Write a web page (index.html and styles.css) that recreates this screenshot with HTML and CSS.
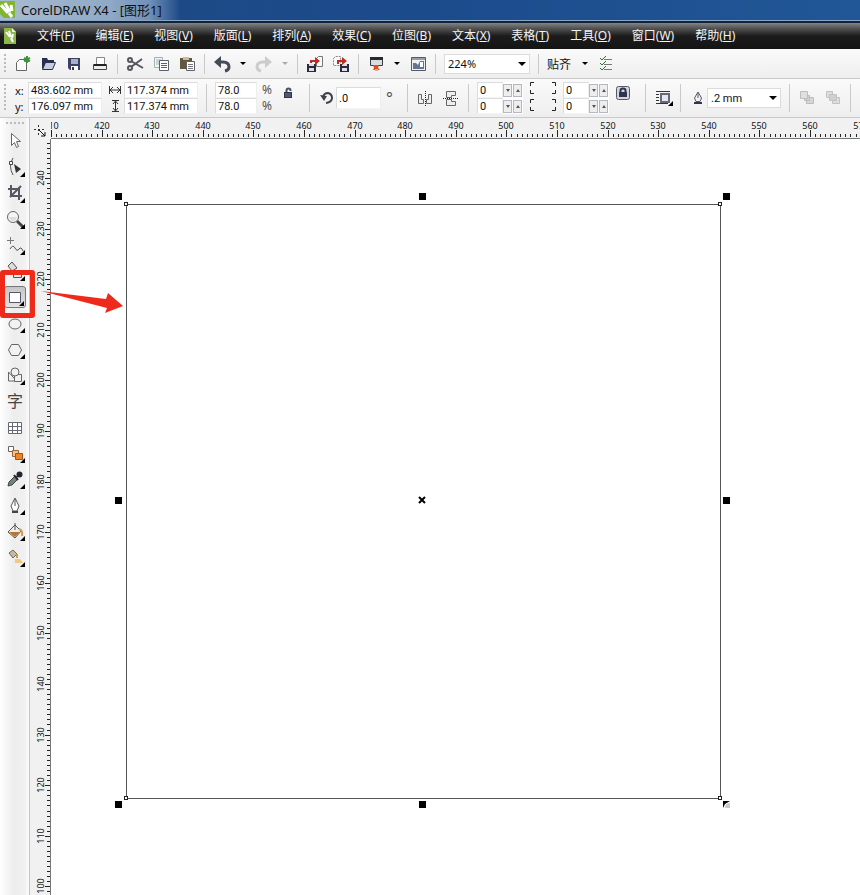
FILE: index.html
```html
<!DOCTYPE html>
<html lang="zh-CN">
<head>
    <meta charset="UTF-8">
    <meta name="viewport" content="width=device-width, initial-scale=1.0">
    <title>CorelDRAW X4 - [图形1]</title>
    <link rel="stylesheet" href="styles.css">
</head>
<body>

    <header class="title-bar">
        <svg class="app-icon" width="16" height="18" viewBox="0 0 16 18">
            <path d="M0 0h15v17H4L0 13z" fill="#7fb62c"/>
            <path d="M1 4l7 8M5 2l5 9M11 4l1 6M9 12l3 4" stroke="#fff" stroke-width="3"/>
        </svg>
        <h1>CorelDRAW X4 - [图形1]</h1>
    </header>

    <nav class="menu-bar">
        <svg class="doc-icon" width="12" height="16" viewBox="0 0 12 16">
            <path d="M0 0h8l4 4v12H0z" fill="#8fb648"/>
            <path d="M8 0v4h4" fill="#e8f0d8"/>
            <path d="M2 4l4 5M5 3l2 6M9 6l-1 4M7 10l2 4" stroke="#fff" stroke-width="2"/>
        </svg>
        <a href="#">文件(<u>F</u>)</a>
        <a href="#">编辑(<u>E</u>)</a>
        <a href="#">视图(<u>V</u>)</a>
        <a href="#">版面(<u>L</u>)</a>
        <a href="#">排列(<u>A</u>)</a>
        <a href="#">效果(<u>C</u>)</a>
        <a href="#">位图(<u>B</u>)</a>
        <a href="#">文本(<u>X</u>)</a>
        <a href="#">表格(<u>T</u>)</a>
        <a href="#">工具(<u>O</u>)</a>
        <a href="#">窗口(<u>W</u>)</a>
        <a href="#">帮助(<u>H</u>)</a>
    </nav>

    <!-- Standard toolbar -->
    <div class="toolbar standard-bar">
        <span class="grip"></span>
        <div class="group">
            <button class="icon-btn" aria-label="New">
                <svg viewBox="0 0 18 18"><path d="M3.500 7.500l3-3h7v11h-10z" fill="#fafafa" stroke="#666"/><path d="M14 1v7M11 3l6 3M17 3l-6 3" stroke="#3d9440" stroke-width="2"/></svg>
            </button>
            <button class="icon-btn" aria-label="Open">
                <svg viewBox="0 0 18 18"><path d="M3 14V3h5l1 2h6v3" fill="#29304c"/><path d="M3.500 14.500l3-7h10l-3 7z" fill="#c3cce0" stroke="#29304c"/></svg>
            </button>
            <button class="icon-btn" aria-label="Save">
                <svg viewBox="0 0 18 18"><path d="M3 3h12v12H5l-2-2z" fill="#3a4066"/><path d="M6 4h7v5H6z" fill="#a9b0ca"/><path d="M6 11h7v4H6z" fill="#fff"/><path d="M7 12h2v3H7z" fill="#333a58"/></svg>
            </button>
            <button class="icon-btn" aria-label="Print">
                <svg viewBox="0 0 18 18"><path d="M5.500 9V2.500h8V9" fill="#fff" stroke="#888"/><path d="M2.500 9.500h13v5h-13z" fill="#eee" stroke="#444"/><path d="M3 9h12v2H3z" fill="#222"/></svg>
            </button>
        </div>
        <span class="sep"></span>
        <div class="group">
            <button class="icon-btn" aria-label="Cut">
                <svg viewBox="0 0 18 18" fill="none" stroke="#55565e" stroke-width="2"><path d="M5 6l12 7M5 12L16 4"/><circle cx="4" cy="5" r="2"/><circle cx="4" cy="13" r="2"/></svg>
            </button>
            <button class="icon-btn" aria-label="Copy">
                <svg viewBox="0 0 18 18"><path d="M2.500 2.500h8v10h-8z" fill="#f1f4f4" stroke="#a2b3b5"/><path d="M4 5h5M4 7h3M4 9h3" stroke="#a2b3b5"/><path d="M7.500 5.500h9v10h-9z" fill="#fff" stroke="#5d6170"/><path d="M9 8.500h6M9 10.500h6M9 12.500h6" stroke="#5d6170"/></svg>
            </button>
            <button class="icon-btn" aria-label="Paste">
                <svg viewBox="0 0 18 18"><path d="M2 3h12v11H2z" fill="#65573d"/><path d="M5 2h6v3H5z" fill="#c7bd9e"/><path d="M8.500 6.500h8v9h-8z" fill="#fff" stroke="#5d6170"/><path d="M10 9.500h5M10 11.500h5M10 13.500h5" stroke="#777"/></svg>
            </button>
        </div>
        <span class="sep"></span>
        <div class="group">
            <button class="icon-btn" aria-label="Undo">
                <svg viewBox="0 0 18 18"><path d="M5 7h5q6 0 6 5 0 3-4 4" fill="none" stroke="#454a57" stroke-width="3"/><path d="M1 7l7-6v12z" fill="#454a57"/></svg>
            </button>
            <button class="caret" aria-label="Undo list"></button>
            <button class="icon-btn" aria-label="Redo" disabled>
                <svg viewBox="0 0 18 18"><path d="M13 7H8q-6 0-6 5 0 3 4 4" fill="none" stroke="#ccc" stroke-width="3"/><path d="M17 7l-7-6v12z" fill="#ccc"/></svg>
            </button>
            <button class="caret" aria-label="Redo list" disabled></button>
        </div>
        <span class="sep"></span>
        <div class="group">
            <button class="icon-btn" aria-label="Import">
                <svg viewBox="0 0 18 18"><path d="M10.500 3.500l2-2h4v10h-6z" fill="#f8f8f8" stroke="#777"/><path d="M1 9h9v8H1z" fill="#292b38"/><path d="M3 13h5v3H3zM3 9h5v2H3z" fill="#dde"/><path d="M4 8V5h5V2l5 4-5 4V7H6v1z" fill="#bd2c24"/></svg>
            </button>
            <button class="icon-btn" aria-label="Export">
                <svg viewBox="0 0 18 18"><path d="M1.500 3.500l2-2h5v9h-7z" fill="#f8f8f8" stroke="#888" stroke-dasharray="2 1"/><path d="M8 9h9v8H8z" fill="#292b38"/><path d="M10 13h5v3h-5zM10 9h5v2h-5z" fill="#dde"/><path d="M5 9V5h5V2l5 4-5 4V7H7v2z" fill="#bd2c24"/></svg>
            </button>
        </div>
        <span class="sep"></span>
        <div class="group">
            <button class="icon-btn" aria-label="Application launcher">
                <svg viewBox="0 0 18 18"><path d="M3.500 2.500h12v8h-12z" fill="#d9dbdf" stroke="#393c43"/><path d="M3 2h13v3H3z" fill="#282a30"/><path d="M6 10h6l-1 3 2 2H6l1-2z" fill="#df4c24"/><path d="M8 14h3v2H8z" fill="#f4ab52"/></svg>
            </button>
            <button class="caret" aria-label="Launcher list"></button>
            <button class="icon-btn" aria-label="Welcome screen">
                <svg viewBox="0 0 18 18"><path d="M2.500 2.500h14v13h-14z" fill="#eef0f4" stroke="#555a68"/><path d="M3 3h13v2H3z" fill="#999eab"/><path d="M4 8h3l2 2 2-4h4v8H4z" fill="#667392"/><path d="M11 7h3v5h-3z" fill="#fff"/></svg>
            </button>
        </div>
        <span class="sep"></span>
        <span class="select-wrap zoom-level">
            <select aria-label="Zoom level"><option>224%</option><option>100%</option></select>
        </span>
        <span class="sep"></span>
        <div class="group">
            <button class="text-btn">贴齐</button>
            <button class="caret" aria-label="Snap list"></button>
            <button class="icon-btn" aria-label="Options">
                <svg viewBox="0 0 18 18" fill="none"><path d="M7 4.500h8M7 9.500h8M7 14.500h8" stroke="#777"/><path d="M3 3l2 2 4-4M3 8l2 2 4-4M3 13l2 2 4-4" stroke="#2f7038"/></svg>
            </button>
        </div>
    </div>

    <!-- Property bar -->
    <div class="toolbar property-bar">
        <span class="grip"></span>
        <div class="fields position">
            <label for="pos-x">x:</label><input id="pos-x" type="text" value="483.602 mm">
            <label for="pos-y">y:</label><input id="pos-y" type="text" value="176.097 mm">
        </div>
        <div class="fields size">
            <label for="obj-w" aria-label="Width"><svg width="14" height="12" viewBox="0 0 14 12"><path d="M1.500 2v8M12.500 2v8M2 6h10M5 3L2 6l3 3M9 3l3 3-3 3" fill="none" stroke="#333"/></svg></label>
            <input id="obj-w" type="text" value="117.374 mm">
            <label for="obj-h" aria-label="Height"><svg width="14" height="12" viewBox="0 0 14 12"><path d="M4 .5h7M4 11.500h7M7.500 1v10M5 4l2.500-3L10 4M5 8l2.500 3L10 8" fill="none" stroke="#333"/></svg></label>
            <input id="obj-h" type="text" value="117.374 mm">
        </div>
        <span class="sep"></span>
        <div class="fields scale">
            <input id="scale-x" type="text" value="78.0"><label for="scale-x">%</label>
            <input id="scale-y" type="text" value="78.0"><label for="scale-y">%</label>
        </div>
        <button class="icon-btn lock-ratio" aria-label="Lock ratio">
            <svg viewBox="0 0 18 18"><path d="M6.500 8V5.500q0-2 2-2t2 2V6" fill="none" stroke="#4c4f60" stroke-width="2"/><path d="M4 7h8v6H4z" fill="#31344d"/><path d="M5 9h6M5 11h6" stroke="#777b98"/></svg>
        </button>
        <span class="sep"></span>
        <label class="rotate-label" for="angle" aria-label="Rotation">
            <svg width="14" height="14" viewBox="0 0 14 14"><path d="M3 6q1-4 5-4 4 1 4 5t-6 5" fill="none" stroke="#3e414b" stroke-width="2"/><path d="M0 4l7 1-3 5z" fill="#3e414b"/></svg>
        </label>
        <input class="angle" id="angle" type="text" value=".0">
        <span class="degree">°</span>
        <span class="sep"></span>
        <div class="group">
            <button class="icon-btn" aria-label="Mirror horizontal">
                <svg viewBox="0 0 18 18"><path d="M2.500 5.500h3v5h2v4h-5zM15.500 5.500h-3v5h-2v4h5z" fill="#eee" stroke="#666"/><path d="M9.500 2v15" stroke="#222" stroke-dasharray="1 1"/></svg>
            </button>
            <button class="icon-btn" aria-label="Mirror vertical">
                <svg viewBox="0 0 18 18"><path d="M4.500 2.500h9v4h-4v2h-5zM4.500 16.500h9v-4h-4v-2h-5z" fill="#eee" stroke="#666"/><path d="M1 9.500h16" stroke="#222" stroke-dasharray="1 1"/></svg>
            </button>
        </div>
        <span class="sep"></span>
        <div class="fields corners">
            <span class="spin"><input type="text" value="0" aria-label="Top left corner"><button class="down" aria-label="Less"></button><button class="up" aria-label="More"></button></span>
            <svg class="brackets" viewBox="0 0 40 34"><path d="M11 1.500H7.500V5M7.500 9v3.500H11M29 1.500h3.500V5M32.500 9v3.500H29M11 18.500H7.500V22M7.500 26v3.500H11M29 18.500h3.500V22M32.500 26v3.500H29" fill="none" stroke="#222"/></svg>
            <span class="spin"><input type="text" value="0" aria-label="Top right corner"><button class="down" aria-label="Less"></button><button class="up" aria-label="More"></button></span>
            <span class="spin"><input type="text" value="0" aria-label="Bottom left corner"><button class="down" aria-label="Less"></button><button class="up" aria-label="More"></button></span>
            <span class="spin"><input type="text" value="0" aria-label="Bottom right corner"><button class="down" aria-label="Less"></button><button class="up" aria-label="More"></button></span>
        </div>
        <button class="icon-btn round-all" aria-label="Round corners together">
            <svg viewBox="0 0 18 18"><rect x="2.500" y="1.500" width="13" height="13" rx="2" fill="#d4d5de" stroke="#555868"/><path d="M6.500 8V5.500q0-2 2.500-2t2.500 2V8" fill="none" stroke="#31344d" stroke-width="2"/><path d="M5 7h8v5H5z" fill="#31344d"/></svg>
        </button>
        <span class="sep"></span>
        <button class="icon-btn flyout" aria-label="Wrap text">
            <svg viewBox="0 0 18 18"><path d="M2 2.500h14M2 5.500h3M2 8.500h3M2 11.500h3M2 14.500h12" stroke="#333"/><path d="M7 5h8v8H7z" fill="#e4e6ee" stroke="#666a78" stroke-width="2"/></svg>
        </button>
        <span class="sep"></span>
        <label class="outline-label" for="outline" aria-label="Outline width">
            <svg width="12" height="14" viewBox="0 0 12 14"><path d="M6 1l3.500 6L8 10.500H4L2.500 7zM6 2v5" fill="#f4f4f4" stroke="#555868"/><path d="M2 11h8v2H2z" fill="#31344d"/></svg>
        </label>
        <span class="select-wrap outline-width">
            <select id="outline"><option>.2 mm</option><option>.5 mm</option></select>
        </span>
        <span class="sep"></span>
        <div class="group">
            <button class="icon-btn" aria-label="To front" disabled>
                <svg viewBox="0 0 18 18" fill="#d6d6d6" stroke="#bdbdbd"><path d="M8.500 8.500h7v6h-7zM6.500 6.500h5v5h-5z"/><path d="M2.500 2.500h7v7h-7z" fill="#e0e0e0"/></svg>
            </button>
            <button class="icon-btn" aria-label="To back" disabled>
                <svg viewBox="0 0 18 18" fill="#dedede" stroke="#c2c2c2"><path d="M2.500 2.500h6v6h-6zM8.500 8.500h7v6h-7z"/><path d="M5.500 5.500h7v6h-7z" fill="#d0d0d0"/></svg>
            </button>
        </div>
        <span class="sep"></span>
    </div>

    <main class="workspace">
        <aside class="toolbox">
            <span class="grip-h"></span>
            <button class="tool" aria-label="Pick">
                <svg viewBox="0 0 22 22"><path d="M7.500 3.500v12l3-3 2 5 2-1-2-5h4z" fill="#fff" stroke="#666"/></svg>
            </button>
            <button class="tool flyout" aria-label="Shape">
                <svg viewBox="0 0 22 22"><path d="M9 2Q4 10 9 19" fill="none" stroke="#555"/><path d="M5.500 5.500h3v3h-3z" fill="#fff" stroke="#444"/><path d="M10 8l7 5-5 4z" fill="#333"/></svg>
            </button>
            <button class="tool flyout" aria-label="Crop">
                <svg viewBox="0 0 22 22"><path d="M4 7h11v11M7 3v11h11M17 4L6 15" fill="none" stroke="#555860" stroke-width="2"/></svg>
            </button>
            <button class="tool flyout" aria-label="Zoom">
                <svg viewBox="0 0 22 22"><path d="M13 13l6 6" stroke="#444" stroke-width="3"/><circle cx="9" cy="9" r="5.500" fill="#f5f5f5" stroke="#666"/><path d="M5 9h8q-1 4-4 4t-4-4" fill="#ddd"/></svg>
            </button>
            <button class="tool flyout" aria-label="Freehand">
                <svg viewBox="0 0 22 22"><path d="M6.500 3v7M3 6.500h7" stroke="#777"/><path d="M6 15q3-5 5-1t4 1 4 2" fill="none" stroke="#555"/></svg>
            </button>
            <button class="tool flyout" aria-label="Smart fill">
                <svg viewBox="0 0 22 22"><path d="M4 6l4-4 5 6-5 3z" fill="#ddd" stroke="#555"/><path d="M9.500 11.500h8v6h-8z" fill="#e8e8e8" stroke="#555"/></svg>
            </button>
            <button class="tool flyout selected" aria-label="Rectangle">
                <svg viewBox="0 0 20 20"><path d="M4.500 5.500h11v10h-11z" fill="#fff" stroke="#555868"/></svg>
                <span class="highlight"></span>
            </button>
            <button class="tool flyout" aria-label="Ellipse">
                <svg viewBox="0 0 22 22"><ellipse cx="11" cy="12" rx="6" ry="5" fill="#f2f2f2" stroke="#666"/></svg>
            </button>
            <button class="tool flyout" aria-label="Polygon">
                <svg viewBox="0 0 22 22"><path d="M7.500 6.500h7l3 5.500-3 5.500h-7l-3-5.500z" fill="#f2f2f2" stroke="#666"/></svg>
            </button>
            <button class="tool flyout" aria-label="Basic shapes">
                <svg viewBox="0 0 22 22" fill="#f2f2f2" stroke="#666"><path d="M4.500 8v9h8z"/><path d="M10.500 10.500h7v7h-7z"/><circle cx="11" cy="8" r="4"/></svg>
            </button>
            <button class="tool text-tool" aria-label="Text">字</button>
            <button class="tool" aria-label="Table">
                <svg viewBox="0 0 22 22" fill="#fff" stroke="#666a72"><path d="M4.500 6.500h13v11h-13zM4.500 10.500h13M4.500 14.500h13M8.500 6.500v11M13.500 6.500v11"/></svg>
            </button>
            <button class="tool flyout" aria-label="Blend">
                <svg viewBox="0 0 22 22"><path d="M4.500 4.500h5v5h-5z" fill="#fff" stroke="#666"/><path d="M8.500 8.500h6v6h-6z" fill="#f2c489" stroke="#94663a"/><path d="M11.500 11.500h7v6h-7z" fill="#ee8528" stroke="#a5521a"/></svg>
            </button>
            <button class="tool flyout" aria-label="Eyedropper">
                <svg viewBox="0 0 22 22"><path d="M4 18l1-4 6-6 3 3-6 6z" fill="#75817c" stroke="#444"/><path d="M10 7l4 5M13 9l3-4" stroke="#222" stroke-width="2"/><circle cx="15.500" cy="6.500" r="3" fill="#222631"/></svg>
            </button>
            <button class="tool flyout" aria-label="Outline">
                <svg viewBox="0 0 22 22"><path d="M11 4l4 8-2 5H9l-2-5zM11 5v7" fill="#fff" stroke="#555"/><path d="M8 17h6v2H8z" fill="#444"/></svg>
            </button>
            <button class="tool flyout" aria-label="Fill">
                <svg viewBox="0 0 22 22"><path d="M4 12l7-7 6 6-6 7z" fill="#eee" stroke="#555"/><path d="M5 12h11l-5 5z" fill="#b8752d"/><path d="M11 10V3" stroke="#555"/><path d="M15 9q4 1 3 7" fill="none" stroke="#d59a53" stroke-width="2"/></svg>
            </button>
            <button class="tool flyout" aria-label="Interactive fill">
                <svg viewBox="0 0 22 22"><path d="M5 7l4-3 4 4-4 4z" fill="#c4b9a5" stroke="#74695a"/><path d="M13 8v4" stroke="#d19a42" stroke-width="2"/><path d="M11 13h5l3 4h-8z" fill="#ecca83"/></svg>
            </button>
        </aside>

        <div class="origin">
            <svg width="14" height="14" viewBox="0 0 14 14"><path d="M0 4.500h12M4.500 0v12" stroke="#333" stroke-dasharray="2 2"/><path d="M5 5l6 6M11 7v4H7" fill="none" stroke="#111"/></svg>
        </div>
        <svg class="ruler ruler-top" id="ruler-top"></svg>
        <svg class="ruler ruler-left" id="ruler-left"></svg>

        <div class="canvas">
            <svg class="drawing" width="720" height="700" viewBox="0 0 720 700">
                <rect x="75.500" y="65.500" width="594" height="594" fill="none" stroke="#555"/>
                <g fill="#fff" stroke="#222">
                    <rect x="73.500" y="63.500" width="3" height="3"/>
                    <rect x="667.500" y="63.500" width="3" height="3"/>
                    <rect x="73.500" y="657.500" width="3" height="3"/>
                    <rect x="667.500" y="657.500" width="3" height="3"/>
                </g>
                <g fill="#000">
                    <rect x="64" y="54" width="7" height="7"/>
                    <rect x="368" y="54" width="7" height="7"/>
                    <rect x="672" y="54" width="7" height="7"/>
                    <rect x="64" y="358" width="7" height="7"/>
                    <rect x="672" y="358" width="7" height="7"/>
                    <rect x="64" y="662" width="7" height="7"/>
                    <rect x="368" y="662" width="7" height="7"/>
                    <path d="M672 662h7l-5 3-2 4z"/>
                </g>
                <path d="M674 669q0-5 5-5v5z" fill="#ccc"/>
                <path d="M368 358l6 6M374 358l-6 6" stroke="#000" stroke-width="2"/>
                <path d="M-10 152L55 160L57 154L72 167L54 174L56 169z" fill="#ee2b1b"/>
            </svg>
        </div>
    </main>

    <script src="rulers.js"></script>
</body>
</html>
```
FILE: styles.css
```css
:root {
    --bar-bg: #f1f1f1;
    --line: #c9c9cc;
    --field-line: #dcdcdf;
    --red: #ee2b1b;
    --ui-font: "Noto Sans", "Noto Sans CJK SC", sans-serif;
    --field-font: Roboto, "Liberation Sans", sans-serif;
}
* {
    box-sizing: border-box;
}
body {
    margin: 0;
    min-height: 100vh;
    display: flex;
    flex-direction: column;
    background: #fff;
    color: #111;
    font-family: var(--ui-font);
    font-size: 11px;
    overflow: hidden;
}
button, input, select {
    font: inherit;
    color: inherit;
    margin: 0;
    padding: 0;
    border: 0;
    border-radius: 0;
    background: none;
}

/* Title and menu */
.title-bar {
    display: flex;
    align-items: center;
    gap: 5px;
    height: 23px;
    padding-bottom: 2px;
    background: linear-gradient(90deg, #a9bcd0 0, #8fa9c6 110px, #6f90b8 150px, #1d4a87 180px, #1c4b8c 50%, #215796 100%);
    border-bottom: 2px solid #10243c;
    box-shadow: inset 0 -1px #8aa5c4;
}
.title-bar h1 {
    margin: 0;
    font-size: 13px;
    line-height: 18px;
    font-weight: normal;
    white-space: nowrap;
}
.menu-bar {
    display: flex;
    align-items: center;
    gap: 21px;
    height: 26px;
    padding-left: 4px;
    background: linear-gradient(#858585 0, #555 5px, #1c1c1c 13px, #141414 100%);
    font-size: 12px;
    line-height: 18px;
}
.menu-bar a {
    color: #f4f4f4;
    text-decoration: none;
    white-space: nowrap;
}

/* Toolbars */
.toolbar {
    display: flex;
    align-items: center;
    padding-left: 4px;
    background: linear-gradient(#fafafa, #eee);
    border-bottom: 1px solid var(--line);
}
.toolbar > * {
    flex-shrink: 0;
}
.standard-bar {
    height: 30px;
}
.property-bar {
    height: 39px;
}
.grip {
    width: 4px;
    height: 20px;
    margin-right: 5px;
    background: repeating-linear-gradient(#bbb 0 2px, transparent 2px 4px);
    background-size: 2px 20px;
    background-repeat: no-repeat;
}
.property-bar .grip {
    height: 28px;
    background-size: 2px 28px;
}
.sep {
    width: 1px;
    height: 20px;
    margin: 0 8px;
    background: var(--line);
}
.property-bar .sep {
    height: 28px;
}
.group {
    display: flex;
    align-items: center;
    gap: 8px;
}
.icon-btn {
    position: relative;
    width: 18px;
    height: 18px;
}
.icon-btn svg, .tool svg {
    display: block;
    width: 100%;
    height: 100%;
}
.caret {
    width: 9px;
    height: 18px;
    margin-left: -1px;
}
.caret::before, .select-wrap::after {
    content: "";
    display: block;
    width: 0;
    margin: 0 auto;
    border: solid transparent;
    border-width: 3px 3px 0;
    border-top-color: #000;
}
.caret:disabled::before {
    border-top-color: #aaa;
}
.text-btn {
    width: 26px;
    font-size: 12px;
    text-align: left;
    white-space: nowrap;
}
.flyout::after {
    content: "";
    position: absolute;
    right: 1px;
    bottom: 1px;
    border: solid transparent;
    border-width: 0 0 5px 5px;
    border-bottom-color: #000;
}
.icon-btn.flyout::after {
    right: -1px;
}

.toolbar input, .toolbar select {
    width: 100%;
    background: #fff;
}
.toolbar input {
    height: 16px;
    padding: 0 2px;
    border: 1px solid var(--field-line);
    border-color: var(--field-line) #eee #f4f4f4 var(--field-line);
}
.property-bar input, .property-bar select {
    font-family: var(--field-font);
}
.select-wrap {
    position: relative;
}
.select-wrap select {
    display: block;
    height: 20px;
    padding-left: 3px;
    appearance: none;
    border: 1px solid var(--field-line);
}
.select-wrap::after {
    position: absolute;
    right: 4px;
    top: 8px;
    border-width: 4px 4px 0;
}
.zoom-level {
    width: 86px;
}
.outline-width {
    width: 74px;
}

.fields {
    display: grid;
    grid-auto-rows: 16px;
    align-items: center;
}
.position {
    grid-template-columns: 15px 74px;
    margin-right: 6px;
}
.position label {
    padding-left: 2px;
}
.size {
    grid-template-columns: 16px 74px;
}
.size svg {
    display: block;
}
.scale {
    grid-template-columns: 42px 20px;
}
.scale label {
    padding-left: 5px;
    font-size: 12px;
    line-height: 16px;
    color: #555;
}
.lock-ratio {
    width: 24px;
    margin-bottom: 8px;
}
.rotate-label, .outline-label {
    display: flex;
    justify-content: center;
    width: 18px;
}
.toolbar .angle {
    width: 45px;
    height: 22px;
}
.degree {
    width: 18px;
    padding-left: 5px;
    font-size: 16px;
    line-height: 20px;
    color: #555;
}
.corners {
    grid-template-columns: 46px 40px 46px;
}
.brackets {
    grid-row: span 2;
    width: 40px;
    height: 34px;
}
.spin {
    display: flex;
    align-items: center;
    height: 16px;
    background: #fff;
}
.spin button {
    display: flex;
    flex: none;
    align-items: center;
    justify-content: center;
    width: 9px;
    height: 13px;
    margin-right: 1px;
    border: 1px solid #b5b8c0;
    background: #eee;
}
.spin button::before {
    content: "";
    border: solid transparent;
    border-width: 3px 2px 0;
    border-top-color: #555;
}
.spin .up::before {
    border-width: 0 2px 3px;
    border-bottom-color: #555;
}
.round-all {
    width: 28px;
    margin-bottom: 8px;
}

/* Work area */
.workspace {
    flex: 1;
    display: grid;
    grid-template-columns: 30px 21px 1fr;
    grid-template-rows: 21px 1fr;
}
.toolbox {
    grid-row: span 2;
    display: flex;
    flex-direction: column;
    gap: 4px;
    padding: 4px 0 0 4px;
    background: linear-gradient(90deg, #fff, #ededed 14px, #f1f1f1 25px, #fafafa 28px);
    border-right: 1px solid #c4c4c8;
}
.grip-h {
    width: 18px;
    height: 4px;
    margin-left: 2px;
    background: repeating-linear-gradient(90deg, #bbb 0 2px, transparent 2px 4px) no-repeat;
    background-size: 18px 2px;
}
.tool {
    position: relative;
    width: 22px;
    height: 22px;
}
.selected {
    border: 1px solid #777;
    border-radius: 3px;
    background: linear-gradient(#c6c6c6, #e4e4e4);
}
.text-tool {
    font-size: 16px;
    line-height: 22px;
    color: #444;
}
.highlight {
    position: absolute;
    z-index: 1;
    left: -5px;
    top: -17px;
    width: 35px;
    height: 48px;
    border: 5px solid var(--red);
    border-radius: 3px;
}
.origin {
    display: flex;
    align-items: flex-end;
    justify-content: center;
    background: var(--bar-bg);
}
.ruler {
    display: block;
    overflow: hidden;
    background: var(--bar-bg);
    font-size: 9px;
}
.ruler path {
    fill: none;
    stroke: #222;
}
.ruler text {
    fill: #111;
    text-anchor: middle;
}
.ruler-top {
    width: 100%;
    height: 21px;
    border-bottom: 1px solid #777;
}
.ruler-left {
    width: 21px;
    height: 100%;
    border-right: 1px solid #777;
}
.canvas {
    position: relative;
    min-height: 740px;
    min-width: 0;
    background: #fff;
}
.drawing {
    position: absolute;
    left: 0;
    top: 0;
    overflow: visible;
}
```
FILE: rulers.js
```js
// pixels per millimetre at the current zoom
const SCALE = 5.06;
// half the width of a label, so one that starts inside the edge is kept
const LABEL_HALF = 8;

function fillRuler(svg, labels, ticks) {
    svg.innerHTML = '<path d="' + ticks + '"/>' + labels;
}

function drawTopRuler() {
    const svg = document.getElementById('ruler-top');
    const width = svg.getBoundingClientRect().width;
    let ticks = '';
    let labels = '';
    for (let mm = 410; (mm - 410) * SCALE < width + LABEL_HALF; mm++) {
        const x = Math.round((mm - 410) * SCALE);
        const major = mm % 10 === 0;
        ticks += `M${x + 0.5} ${major ? 12 : 16}V19`;
        if (major) labels += `<text x="${x}" y="11">${mm}</text>`;
    }
    fillRuler(svg, labels, ticks);
}

function drawLeftRuler() {
    const svg = document.getElementById('ruler-left');
    const height = svg.getBoundingClientRect().height;
    let ticks = '';
    let labels = '';
    for (let mm = 247; 39 + (240 - mm) * SCALE < height + LABEL_HALF; mm--) {
        const y = Math.round(39 + (240 - mm) * SCALE);
        const major = mm % 10 === 0;
        ticks += `M${major ? 15 : 17} ${y + 0.5}H20`;
        if (major) labels += `<text transform="translate(14 ${y}) rotate(-90)">${mm}</text>`;
    }
    fillRuler(svg, labels, ticks);
}

drawTopRuler();
drawLeftRuler();
```
